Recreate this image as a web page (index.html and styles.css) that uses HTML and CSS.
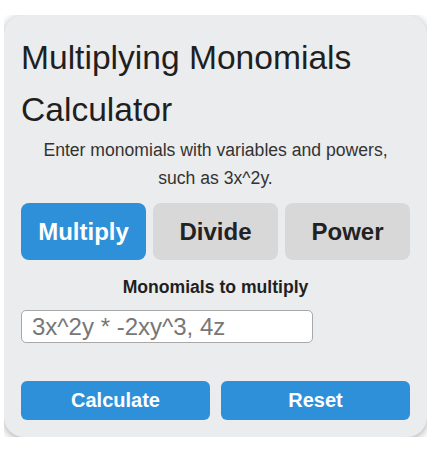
FILE: index.html
```html
<!DOCTYPE html>
<html>
<head>
    <title>Multiplying Monomials Calculator</title>
    <meta name="viewport" content="width=device-width, initial-scale=1.0">
    <link rel="stylesheet" href="styles.css">
</head>
<body>
    <div class="calc-frame">
        <div class="calc-card">
            <h1 class="calc-title">Multiplying Monomials Calculator</h1>
            <p class="calc-intro">Enter monomials with variables and powers, such as 3x^2y.</p>

            <div class="calc-tabs">
                <button class="calc-tab active">Multiply</button>
                <button class="calc-tab">Divide</button>
                <button class="calc-tab">Power</button>
            </div>

            <label class="calc-label" for="monomials">Monomials to multiply</label>
            <input class="calc-input" id="monomials" type="text" placeholder="3x^2y * -2xy^3, 4z">

            <div class="calc-actions">
                <button class="calc-btn">Calculate</button>
                <button class="calc-btn">Reset</button>
            </div>
        </div>
    </div>
</body>
</html>
```

FILE: styles.css
```css
body {
    margin: 0;
    background: #fff;
    font-family: "Liberation Sans", Arial, Helvetica, sans-serif;
    color: #222;
}

/* the screenshot crops the card right at its edges */
.calc-frame {
    margin: 15px 6px 0 4px;
    overflow: hidden;
}

.calc-card {
    background-color: #ebeced;
    border-radius: 20px;
    box-shadow: 0 2px 10px rgba(0, 0, 0, 0.35);
    padding: 17px;
}

.calc-title {
    margin: 0;
    font-size: 33.6px;
    font-weight: 400;
    line-height: 52px;
    color: #1f1f1f;
}

.calc-intro {
    margin: 0 0 11px;
    padding: 0 12px;
    font-size: 17.6px;
    line-height: 28px;
    text-align: center;
    color: #333;
}

.calc-tabs {
    display: flex;
    gap: 7px;
}

.calc-tab {
    flex: 1;
    height: 57px;
    border: none;
    border-radius: 8px;
    background-color: #d8d8d8;
    color: #222;
    font-family: inherit;
    font-size: 24px;
    font-weight: 700;
    cursor: pointer;
}

.calc-tab.active {
    background-color: #2e90d9;
    color: #fff;
}

.calc-label {
    display: block;
    margin: 17px 0 13px;
    font-size: 17.6px;
    font-weight: 700;
    line-height: 20px;
    text-align: center;
    color: #1f1f1f;
}

.calc-input {
    display: block;
    box-sizing: border-box;
    width: 75%;
    height: 33px;
    padding: 2px 10px;
    border: 1px solid #a8a8a8;
    border-radius: 5px;
    background: #fff;
    font-family: inherit;
    font-size: 24px;
    outline: none;
}

.calc-input::placeholder {
    color: #777;
}

.calc-actions {
    display: flex;
    gap: 11px;
    margin-top: 38px;
}

.calc-btn {
    flex: 1;
    height: 39px;
    border: none;
    border-radius: 6px;
    background-color: #2e90d9;
    color: #fff;
    font-family: inherit;
    font-size: 20px;
    font-weight: 700;
    cursor: pointer;
}
```
